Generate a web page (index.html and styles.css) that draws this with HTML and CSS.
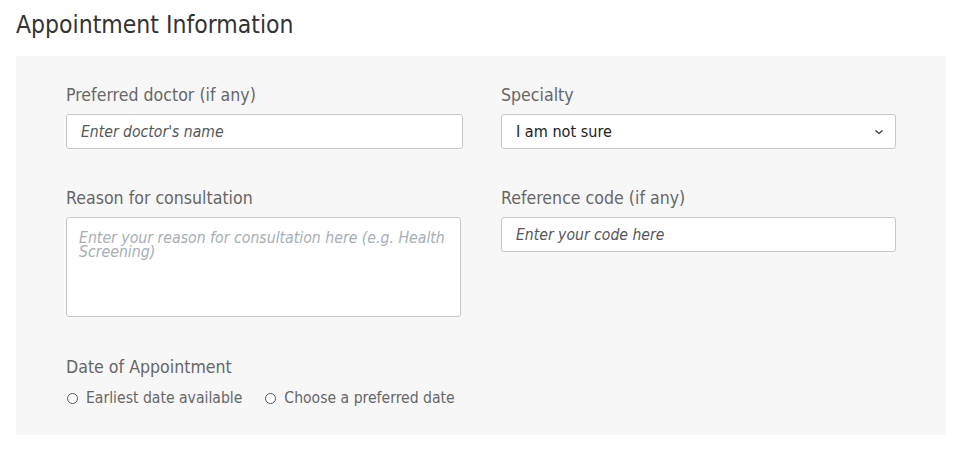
FILE: index.html
```html
<!DOCTYPE html>
<html lang="en">
<head>
<meta charset="utf-8">
<title>Appointment Information</title>
<link rel="stylesheet" href="styles.css">
</head>
<body>
<section class="section">
  <h2 class="section-title">Appointment Information</h2>
  <div class="panel">
    <div class="grid">
      <div class="field">
        <label class="label" for="doctor">Preferred doctor (if any)</label>
        <input class="input" id="doctor" type="text" placeholder="Enter doctor's name">
      </div>
      <div class="field">
        <label class="label" for="specialty">Specialty</label>
        <div class="select">
          <span class="select-value">I am not sure</span>
          <svg class="chevron" width="10" height="6" viewBox="0 0 10 6"><path d="M1.5 1.5 L5 4.5 L8.5 1.5" fill="none" stroke="#333" stroke-width="1.3"/></svg>
        </div>
      </div>
      <div class="field">
        <label class="label" for="reason">Reason for consultation</label>
        <textarea class="textarea" id="reason" placeholder="Enter your reason for consultation here (e.g. Health Screening)"></textarea>
      </div>
      <div class="field">
        <label class="label" for="code">Reference code (if any)</label>
        <input class="input" id="code" type="text" placeholder="Enter your code here">
      </div>
    </div>
    <div class="field date-field">
      <span class="label">Date of Appointment</span>
      <div class="radios">
        <label class="radio"><span class="radio-dot"></span>Earliest date available</label>
        <label class="radio"><span class="radio-dot"></span>Choose a preferred date</label>
      </div>
    </div>
  </div>
</section>
</body>
</html>
```
FILE: styles.css
```css
* { box-sizing: border-box; }
html, body { margin: 0; padding: 0; background: #fff; }
body {
  font-family: "DejaVu Sans Condensed", "DejaVu Sans", sans-serif;
  color: #333;
}
.section { padding: 0 30px 0 16px; }
.section-title {
  margin: 0;
  padding-top: 9px;
  height: 56px;
  font-size: 24.5px;
  line-height: 32px;
  font-weight: normal;
  color: #333;
}
.panel {
  background: #f7f7f7;
  padding: 29px 50px 27px 50px;
}
.grid {
  display: grid;
  grid-template-columns: 397px 395px;
  column-gap: 38px;
  row-gap: 39px;
  align-items: start;
}
.field { display: flex; flex-direction: column; }
.label {
  font-size: 17.6px;
  line-height: 21px;
  color: #666;
  margin-bottom: 8px;
}
.input, .select {
  height: 35px;
  border: 1px solid #c8c8c8;
  border-radius: 3px;
  background: #fff;
  font-family: inherit;
  font-size: 15.6px;
  padding: 0 14px;
  color: #333;
  outline: none;
}
.input::placeholder { color: #555; font-style: italic; }
.select {
  display: flex;
  align-items: center;
  justify-content: space-between;
  padding-right: 11px;
}
.select-value { color: #222; font-size: 16.1px; }
.textarea {
  width: 395px;
  height: 100px;
  border: 1px solid #c8c8c8;
  border-radius: 3px;
  background: #fff;
  font-family: inherit;
  font-size: 15.7px;
  line-height: 14px;
  padding: 13px 12px;
  resize: none;
  outline: none;
}
.textarea::placeholder { color: #a7aeb6; font-style: italic; }
.date-field { margin-top: 40px; }
.date-field .label { margin-bottom: 10px; }
.radios { display: flex; gap: 22px; }
.radio {
  display: flex;
  align-items: center;
  font-size: 15.6px;
  line-height: 20px;
  color: #666;
}
.radio-dot {
  width: 11px;
  height: 11px;
  border: 1.2px solid #555;
  border-radius: 50%;
  background: #fff;
  margin: 0 8px 0 1px;
}
```
